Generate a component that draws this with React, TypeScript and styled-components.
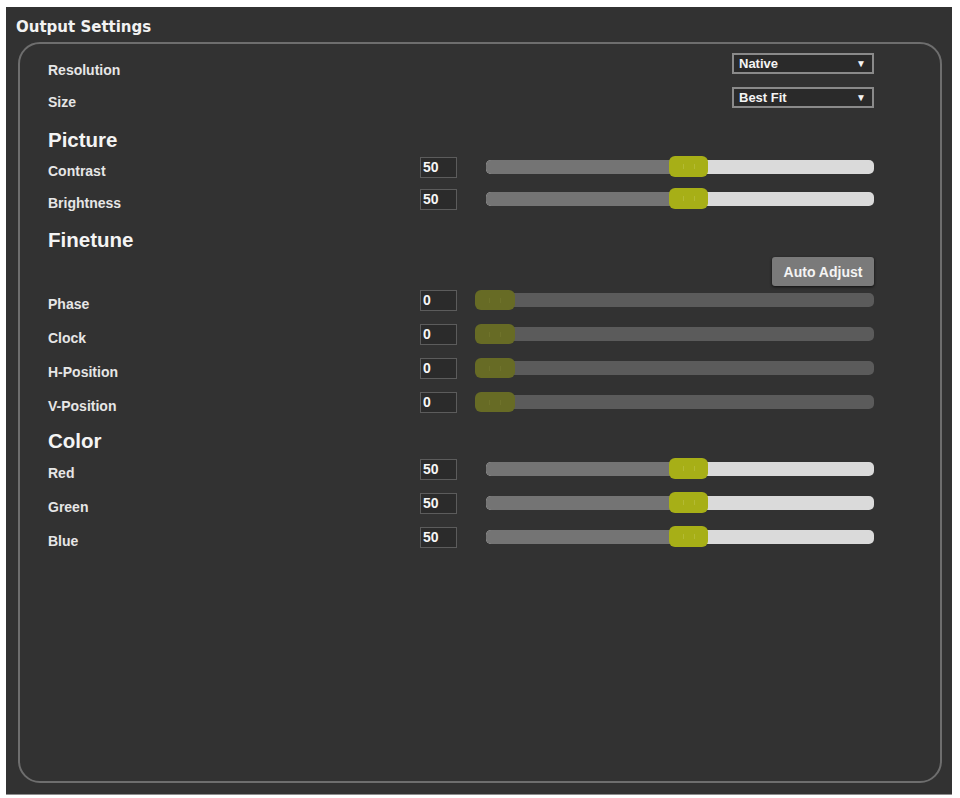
import React from "react";
import styled, { createGlobalStyle } from "styled-components";

const GlobalStyle = createGlobalStyle`
  html, body { margin: 0; padding: 0; background: #ffffff; }
  body { font-family: "Liberation Sans", Arial, sans-serif; }
  * { box-sizing: border-box; }
`;

const Panel = styled.section`
  margin: 7px 0 0 6px;
  width: 946px;
  height: 788px;
  background: #323232;
  border-bottom: 1px solid #8e8e8e;
  display: flex;
  flex-direction: column;
`;

const PanelTitle = styled.h1`
  margin: 0;
  height: 35px;
  padding: 5px 0 0 10px;
  display: flex;
  align-items: center;
  font-family: "DejaVu Sans", "Liberation Sans", sans-serif;
  font-weight: bold;
  font-size: 15px;
  color: #f2f2f2;
`;

const Group = styled.div`
  margin: 0 10px 0 12px;
  height: 741px;
  border: 2px solid #6e6e6e;
  border-radius: 22px;
  padding: 6px 66px 0 28px;
  display: flex;
  flex-direction: column;
`;

const SelectRow = styled.div<{ $labelTop: number }>`
  height: 34px;
  display: flex;
  justify-content: space-between;
  align-items: flex-start;
  & > span {
    padding-top: ${(p) => p.$labelTop}px;
  }
`;

const Label = styled.span`
  font-family: "Liberation Sans", Arial, sans-serif;
  font-weight: bold;
  font-size: 14px;
  line-height: 20px;
  color: #e6e6e6;
`;

const Select = styled.div`
  margin-top: 3px;
  width: 142px;
  height: 21px;
  border: 2px solid #8a8a8a;
  background: #2a2a2a;
  color: #f4f4f4;
  font-family: "Liberation Sans", Arial, sans-serif;
  font-weight: bold;
  font-size: 13px;
  line-height: 17px;
  padding: 0 6px 0 5px;
  display: flex;
  justify-content: space-between;
  align-items: center;
`;

const Arrow = styled.span`
  font-size: 10px;
  color: #f4f4f4;
`;

const Heading = styled.h2<{ $top: number }>`
  margin: ${(p) => p.$top}px 0 0 0;
  height: 22px;
  font-family: "Liberation Sans", Arial, sans-serif;
  font-weight: bold;
  font-size: 20.5px;
  line-height: 22px;
  color: #f4f4f4;
`;

const SliderRow = styled.div<{ $height: number }>`
  height: ${(p) => p.$height}px;
  display: flex;
  align-items: center;
`;

const RowLabel = styled(Label)`
  width: 372px;
  flex: none;
  margin-top: 8px;
`;

const NumberBox = styled.input`
  width: 37px;
  height: 21px;
  flex: none;
  border: 1px solid #5c5c5c;
  background: #2b2b2b;
  color: #f6f6f6;
  font-family: "Liberation Sans", Arial, sans-serif;
  font-weight: bold;
  font-size: 14px;
  padding: 0 0 0 2px;
  outline: none;
`;

const Track = styled.div<{ $fine?: boolean }>`
  position: relative;
  flex: 1;
  height: 14px;
  margin-left: ${(p) => (p.$fine ? 18 : 29)}px;
  border-radius: 5px;
  background: ${(p) => (p.$fine ? "#5b5b5b" : "#dadada")};
`;

const Fill = styled.div`
  position: absolute;
  left: 0;
  top: 0;
  bottom: 0;
  border-radius: 5px 0 0 5px;
  background: #747474;
`;

const Thumb = styled.div<{ $fine?: boolean }>`
  position: absolute;
  top: ${(p) => (p.$fine ? -3 : -4)}px;
  width: ${(p) => (p.$fine ? 40 : 39)}px;
  height: ${(p) => (p.$fine ? 20 : 21)}px;
  border-radius: 6px;
  background: ${(p) => (p.$fine ? "#676b25" : "#a7af17")};
  display: flex;
  align-items: center;
  justify-content: center;
  &::after {
    content: "";
    width: 10px;
    height: 5px;
    border-left: 1px solid ${(p) => (p.$fine ? "#6f732b" : "#b3ba33")};
    border-right: 1px solid ${(p) => (p.$fine ? "#6f732b" : "#b3ba33")};
  }
`;

const ButtonRow = styled.div`
  height: 32px;
  display: flex;
  justify-content: flex-end;
  align-items: flex-start;
`;

const Button = styled.button`
  margin-top: 6px;
  width: 102px;
  height: 29px;
  border: none;
  border-radius: 3px;
  background: #7a7a7a;
  color: #f4f4f4;
  font-family: "Liberation Sans", Arial, sans-serif;
  font-weight: bold;
  font-size: 14px;
  box-shadow: 0 1px 3px rgba(0, 0, 0, 0.7);
  padding: 0;
`;

type SliderProps = { label: string; value: number; fine?: boolean };

const Slider = ({ label, value, fine }: SliderProps) => (
  <SliderRow $height={fine ? 34 : 32}>
    <RowLabel>{label}</RowLabel>
    <NumberBox readOnly value={String(value)} />
    <Track $fine={fine}>
      {!fine && <Fill style={{ width: `calc(${value}% + ${19 - value * 0.22}px)` }} />}
      <Thumb $fine={fine} style={{ left: fine ? `${value}%` : `calc(${value}% - ${value * 0.22}px)` }} />
    </Track>
  </SliderRow>
);

const ColorRow = ({ label }: { label: string }) => (
  <SliderRow $height={34}>
    <RowLabel>{label}</RowLabel>
    <NumberBox readOnly value="50" />
    <Track>
      <Fill style={{ width: `calc(50% + 8px)` }} />
      <Thumb style={{ left: `calc(50% - 11px)` }} />
    </Track>
  </SliderRow>
);

export default function App() {
  return (
    <>
      <GlobalStyle />
      <Panel>
        <PanelTitle>Output Settings</PanelTitle>
        <Group>
          <SelectRow $labelTop={10}>
            <Label>Resolution</Label>
            <Select>
              Native<Arrow>▼</Arrow>
            </Select>
          </SelectRow>
          <SelectRow $labelTop={8}>
            <Label>Size</Label>
            <Select>
              Best Fit<Arrow>▼</Arrow>
            </Select>
          </SelectRow>

          <Heading $top={11}>Picture</Heading>
          <Slider label="Contrast" value={50} />
          <Slider label="Brightness" value={50} />

          <Heading $top={14}>Finetune</Heading>
          <ButtonRow>
            <Button>Auto Adjust</Button>
          </ButtonRow>
          <Slider label="Phase" value={0} fine />
          <Slider label="Clock" value={0} fine />
          <Slider label="H-Position" value={0} fine />
          <Slider label="V-Position" value={0} fine />

          <Heading $top={11}>Color</Heading>
          <ColorRow label="Red" />
          <ColorRow label="Green" />
          <ColorRow label="Blue" />
        </Group>
      </Panel>
    </>
  );
}
